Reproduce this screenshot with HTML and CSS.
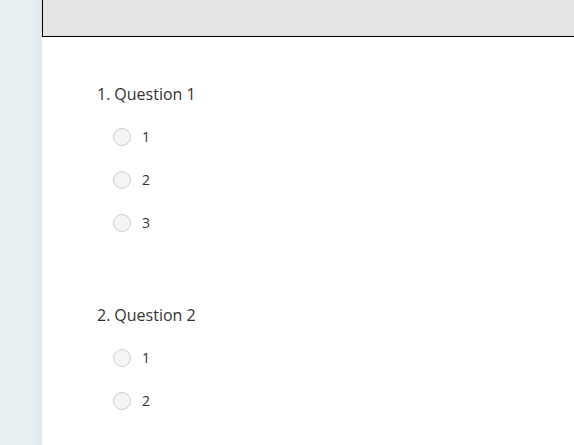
FILE: index.html
```html
<!DOCTYPE html>
<html>
<head>
<meta charset="utf-8">
<link rel="stylesheet" href="styles.css">
</head>
<body>
<div class="page">
  <div class="side"></div>
  <div class="card">
    <div class="header"></div>
    <div class="content">
      <div class="question">
        <div class="title"><span class="num">1.</span>Question 1</div>
        <label class="option"><span class="radio"></span><span class="label">1</span></label>
        <label class="option"><span class="radio"></span><span class="label">2</span></label>
        <label class="option"><span class="radio"></span><span class="label">3</span></label>
      </div>
      <div class="question">
        <div class="title"><span class="num">2.</span>Question 2</div>
        <label class="option"><span class="radio"></span><span class="label">1</span></label>
        <label class="option"><span class="radio"></span><span class="label">2</span></label>
      </div>
    </div>
  </div>
</div>
</body>
</html>
```
FILE: styles.css
```css
html, body {
  margin: 0;
  padding: 0;
  height: 100%;
  overflow: hidden;
}
body {
  font-family: "Open Sans", "Noto Sans", sans-serif;
  color: #333;
  background: #e6eff2;
}
.page {
  display: flex;
  height: 100%;
}
.side {
  width: 42px;
  flex: none;
  background: linear-gradient(to right, #e6eff2 0, #e6eff2 34px, #dde6e9 42px);
}
.card {
  flex: 1;
  background: #fff;
  display: flex;
  flex-direction: column;
}
.header {
  height: 37px;
  box-sizing: border-box;
  background: #e4e4e4;
  border-left: 1px solid #000;
  border-bottom: 1px solid #000;
  flex: none;
}
.content {
  padding: 46px 0 0 55px;
}
.question {
  margin-bottom: 60px;
}
.title {
  font-size: 16px;
  line-height: 22px;
  height: 22px;
}
.num {
  margin-right: 4px;
}
.option {
  display: flex;
  align-items: center;
  height: 43px;
  margin-left: 16px;
}
.option:first-of-type {
  margin-top: 10px;
}
.radio {
  width: 18px;
  height: 18px;
  box-sizing: border-box;
  border-radius: 50%;
  background: #f4f4f4;
  border: 1px solid #cfcfcf;
  margin-right: 11px;
}
.label {
  font-size: 14px;
}
```
